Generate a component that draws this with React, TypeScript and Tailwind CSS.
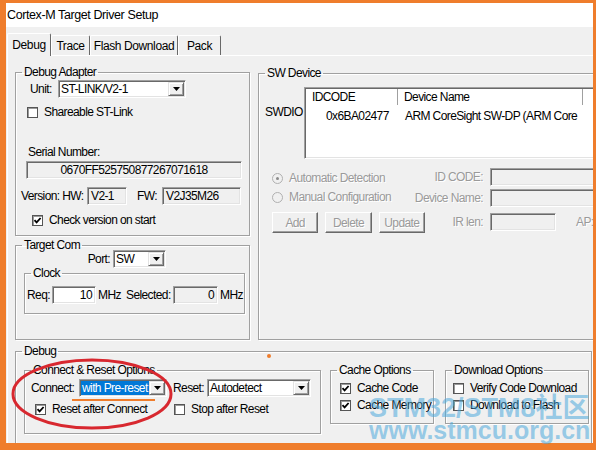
import React from "react";

// classic Win32 bevels
const sunken =
  "border border-t-[#a0a0a0] border-l-[#a0a0a0] border-r-white border-b-white shadow-[inset_1px_1px_0_#696969,inset_-1px_-1px_0_#e3e3e3]";
const raised =
  "border border-t-[#e3e3e3] border-l-[#e3e3e3] border-r-[#696969] border-b-[#696969] shadow-[inset_1px_1px_0_#fff,inset_-1px_-1px_0_#a0a0a0]";
const dim = "text-[#9a9a9a] [text-shadow:1px_1px_0_#fff]";

function Group({ title, className, children }: { title: string; className?: string; children?: React.ReactNode }) {
  return (
    <fieldset
      className={`shrink-0 border border-[#a0a0a0] shadow-[inset_1px_1px_0_#fff,1px_1px_0_#fff] ${className ?? ""}`}
    >
      <legend className="ml-[6px] px-[2px] leading-[14px]">{title}</legend>
      {children}
    </fieldset>
  );
}

function Arrow() {
  return (
    <svg width="7" height="4" viewBox="0 0 7 4">
      <polygon points="0,0 7,0 3.5,4" fill="#000" />
    </svg>
  );
}

function Combo({ value, className, selected }: { value: string; className: string; selected?: boolean }) {
  return (
    <div className={`shrink-0 h-[18px] bg-white p-[1px] flex ${sunken} ${className}`}>
      <span
        className={`flex-1 flex items-center pl-[1px] whitespace-nowrap overflow-hidden ${
          selected ? "bg-[#0078d7] text-white" : ""
        }`}
      >
        {value}
      </span>
      <span className={`w-[16px] bg-[#f0f0f0] flex items-center justify-center ${raised}`}>
        <Arrow />
      </span>
    </div>
  );
}

function Box({ value, className, white, align }: { value?: string; className: string; white?: boolean; align?: string }) {
  return (
    <div
      className={`shrink-0 h-[18px] flex items-center px-[3px] whitespace-nowrap ${white ? "bg-white" : "bg-[#f0f0f0]"} ${sunken} ${
        align ?? "justify-start"
      } ${className}`}
    >
      {value}
    </div>
  );
}

function Check({ on, label, className }: { on?: boolean; label: string; className?: string }) {
  return (
    <div className={`flex items-center h-[14px] gap-[6px] whitespace-nowrap ${className ?? ""}`}>
      <span className="w-[11px] h-[11px] bg-white border border-[#555] shadow-[inset_1px_1px_0_#9a9a9a] flex items-center justify-center">
        {on && (
          <svg width="9" height="9" viewBox="0 0 9 9">
            <polyline points="1.5,4.2 3.6,6.4 7.6,2" fill="none" stroke="#000" strokeWidth="1.8" />
          </svg>
        )}
      </span>
      <span>{label}</span>
    </div>
  );
}

function Radio({ on, label }: { on?: boolean; label: string }) {
  return (
    <div className={`flex items-center h-[14px] gap-[6px] whitespace-nowrap ${dim}`}>
      <span className="w-[11px] h-[11px] rounded-full border border-[#b0b0b0] bg-[#f0f0f0] flex items-center justify-center [text-shadow:none]">
        {on && <span className="w-[3px] h-[3px] rounded-full bg-[#8a8a8a]" />}
      </span>
      {label}
    </div>
  );
}

function Btn({ label }: { label: string }) {
  return (
    <div
      className={`w-[47px] h-[21px] flex items-center justify-center bg-[#f0f0f0] border border-t-white border-l-white border-r-[#696969] border-b-[#696969] shadow-[inset_-1px_-1px_0_#a0a0a0] ${dim}`}
    >
      {label}
    </div>
  );
}

// right-aligned field caption; long captions spill to the left
function Caption({ text }: { text: string }) {
  return (
    <span className="w-[58px] flex justify-end">
      <span className={`whitespace-nowrap ${dim}`}>{text}</span>
    </span>
  );
}

function Tab({ label, active, className }: { label: string; active?: boolean; className: string }) {
  return (
    <div
      className={`shrink-0 flex items-center justify-center bg-[#f0f0f0] border-t border-l border-white border-r border-r-[#696969] rounded-t-[2px] ${
        active ? "relative z-10 -mb-px h-[23px]" : "h-[20px]"
      } ${className}`}
    >
      {label}
    </div>
  );
}

export default function App() {
  return (
    <div className="relative w-[600px] h-[454px] bg-white overflow-hidden font-['Liberation_Sans',Arial,sans-serif] text-[12px] leading-[14px] tracking-[-0.6px] text-black">
      <div className="w-[596px] h-[450px] border-solid border-[#ef7d2c] border-l-[6px] border-t-[3px] border-r-[3px] border-b-[7px] bg-[#f0f0f0] overflow-hidden flex flex-col">
        {/* title bar */}
        <div className="h-[24px] shrink-0 bg-white flex items-center pl-[1px] text-[12.5px] tracking-[-0.4px]">
          Cortex-M Target Driver Setup
        </div>

        {/* tab strip */}
        <div className="flex items-end h-[22px] mt-[6px] ml-[1px] shrink-0 tracking-[-0.4px]">
          <Tab label="Debug" active className="w-[44px]" />
          <Tab label="Trace" className="w-[39px]" />
          <Tab label="Flash Download" className="w-[88px]" />
          <Tab label="Pack" className="w-[43px]" />
        </div>

        {/* Debug page */}
        <div className="flex-1 ml-[1px] border-t border-l border-white pl-[7px] pt-[9px] flex flex-col">
          <div className="flex items-start">
            <div className="w-[235px] shrink-0 flex flex-col">
              <Group title="Debug Adapter" className="w-[235px] h-[171px] flex flex-col">
                <div className="mt-[1px] h-[18px] pl-[14px] flex items-center">
                  <span className="w-[28px]">Unit:</span>
                  <Combo value="ST-LINK/V2-1" className="w-[128px]" />
                </div>
                <Check label="Shareable ST-Link" className="mt-[7px] pl-[11px]" />
                <div className="mt-[26px] h-[14px] pl-[12px]">Serial Number:</div>
                <Box value="0670FF525750877267071618" className="mt-[2px] ml-[10px] w-[216px]" align="justify-center" />
                <div className="mt-[8px] h-[18px] pl-[5px] flex items-center">
                  <span className="w-[66px] whitespace-nowrap">Version: HW:</span>
                  <Box value="V2-1" className="w-[40px]" />
                  <span className="ml-[10px] w-[25px]">FW:</span>
                  <Box value="V2J35M26" className="w-[79px]" />
                </div>
                <Check on label="Check version on start" className="mt-[8px] pl-[16px]" />
              </Group>

              <Group title="Target Com" className="mt-[2px] w-[235px] h-[102px] flex flex-col">
                <div className="-mt-[2px] h-[18px] flex items-center">
                  <span className="w-[97px] pr-[3px] text-right">Port:</span>
                  <Combo value="SW" className="w-[53px]" />
                </div>
                <Group title="Clock" className="-mt-[2px] ml-[8px] w-[221px] h-[48px]">
                  <div className="mt-[6px] h-[18px] pl-[2px] flex items-center whitespace-nowrap">
                    <span className="w-[25px]">Req:</span>
                    <Box value="10" white className="w-[44px]" align="justify-end" />
                    <span className="ml-[2px] w-[28px]">MHz</span>
                    <span className="w-[47px]">Selected:</span>
                    <Box value="0" className="w-[45px]" align="justify-end" />
                    <span className="ml-[2px]">MHz</span>
                  </div>
                </Group>
              </Group>
            </div>

            <Group title="SW Device" className="ml-[8px] mt-[1px] w-[345px] h-[274px] flex flex-col">
              <div className="mt-[7px] flex items-start">
                <span className="w-[45px] shrink-0 pl-[6px] mt-[18px]">SWDIO</span>
                <div className={`w-[300px] h-[72px] shrink-0 bg-white ${sunken} p-[1px]`}>
                  <div className="flex h-[16px] items-center whitespace-nowrap">
                    <div className="w-[92px] h-full flex items-center pl-[6px] border-r border-[#a0a0a0]">IDCODE</div>
                    <div className="w-[185px] h-full flex items-center pl-[6px] border-r border-[#a0a0a0]">Device Name</div>
                  </div>
                  <div className="flex h-[14px] mt-[4px] items-center whitespace-nowrap">
                    <div className="w-[92px] pl-[20px]">0x6BA02477</div>
                    <div className="pl-[7px]">ARM CoreSight SW-DP (ARM Core</div>
                  </div>
                </div>
              </div>
              <div className="flex items-start">
                <div className="w-[166px] shrink-0 pl-[13px] flex flex-col">
                  <div className="mt-[12px]">
                    <Radio on label="Automatic Detection" />
                  </div>
                  <div className="mt-[5px]">
                    <Radio label="Manual Configuration" />
                  </div>
                  <div className="mt-[8px] flex gap-[7px]">
                    <Btn label="Add" />
                    <Btn label="Delete" />
                    <Btn label="Update" />
                  </div>
                </div>
                <div className="flex flex-col">
                  <div className="mt-[9px] h-[18px] flex items-center">
                    <Caption text="ID CODE:" />
                    <Box className="ml-[7px] w-[110px]" />
                  </div>
                  <div className="mt-[3px] h-[18px] flex items-center">
                    <Caption text="Device Name:" />
                    <Box className="ml-[7px] w-[110px]" />
                  </div>
                  <div className="mt-[6px] h-[18px] flex items-center">
                    <Caption text="IR len:" />
                    <Box className="ml-[7px] w-[66px]" />
                    <span className={`ml-[20px] ${dim}`}>AP:</span>
                  </div>
                </div>
              </div>
            </Group>
          </div>

          <Group title="Debug" className="mt-[4px] w-[577px] h-[100px]">
            <div className="mt-[5px] ml-[8px] flex items-start">
              <Group title="Connect & Reset Options" className="w-[297px] h-[71px] flex flex-col">
                <div className="mt-[2px] h-[18px] pl-[6px] flex items-center">
                  <span className="w-[48px]">Connect:</span>
                  <Combo value="with Pre-reset" selected className="w-[88px]" />
                  <span className="ml-[6px] w-[34px]">Reset:</span>
                  <Combo value="Autodetect" className="w-[104px]" />
                </div>
                <div className="mt-[5px] pl-[10px] flex">
                  <Check on label="Reset after Connect" className="w-[139px]" />
                  <Check label="Stop after Reset" />
                </div>
              </Group>
              <Group title="Cache Options" className="ml-[9px] w-[104px] h-[61px] flex flex-col">
                <Check on label="Cache Code" className="mt-[4px] pl-[9px]" />
                <Check on label="Cache Memory" className="mt-[3px] pl-[9px]" />
              </Group>
              <Group title="Download Options" className="ml-[11px] w-[144px] h-[61px] flex flex-col">
                <Check label="Verify Code Download" className="mt-[4px] pl-[7px]" />
                <Check label="Download to Flash" className="mt-[3px] pl-[7px]" />
              </Group>
            </div>
          </Group>
        </div>
      </div>

      {/* markup drawn on top of the dialog */}
      <svg className="absolute left-0 top-0 pointer-events-none" width="600" height="454">
        <ellipse cx="92" cy="394" rx="79" ry="34" fill="none" stroke="#d8282f" strokeWidth="3" />
      </svg>
      <div className="absolute left-[72px] top-[399px] w-[83px] h-[2px] bg-[#ef7d2c]" />
      <div className="absolute left-[267px] top-[354px] w-[4px] h-[4px] rounded-full bg-[#ef7d2c]" />

      {/* watermark */}
      <div className="absolute left-[369px] top-[395px] flex flex-col font-bold leading-none tracking-normal text-[#4aa8dc]/55 pointer-events-none font-['Liberation_Sans','Noto_Sans_CJK_SC',sans-serif]">
        <span className="text-[27px] whitespace-nowrap">STM32/STM8社区</span>
        <span className="text-[25px] -mt-[4px] whitespace-nowrap">www.stmcu.org.cn</span>
      </div>
    </div>
  );
}
